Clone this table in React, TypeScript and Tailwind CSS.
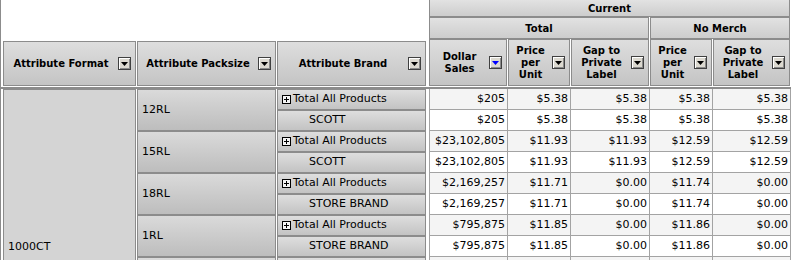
import React from "react";

function DropBtn({ blue }: { blue?: boolean }) {
  return (
    <span className="w-[13px] h-[13px] shrink-0 border border-[#404040] bg-[#dcd9d0] shadow-[inset_1px_1px_0_#ffffff,inset_-1px_-1px_0_#8a8a8a] flex items-center justify-center">
      <svg width="7" height="4" viewBox="0 0 7 4">
        <path d="M0 0H7L3.5 4Z" fill={blue ? "#0000ff" : "#000000"} />
      </svg>
    </span>
  );
}

function PlusBox() {
  return (
    <svg width="9" height="9" viewBox="0 0 9 9" className="shrink-0">
      <rect x="0.5" y="0.5" width="8" height="8" fill="#f4f4f4" stroke="#000" />
      <path d="M2 4.5H7M4.5 2V7" stroke="#000" />
    </svg>
  );
}

const hdr =
  "border border-[#8c8c8c] bg-linear-to-b from-[#dedede] to-[#c4c4c4] flex items-center";

function LeftHeader({ label }: { label: string }) {
  return (
    <div className={hdr + " pr-[4px]"}>
      <span className="flex-1 text-center text-[10px] font-bold leading-[12px]">{label}</span>
      <DropBtn />
    </div>
  );
}

function LeafHeader({ lines, blue }: { lines: string[]; blue?: boolean }) {
  return (
    <div className={hdr + " pr-[4px]"}>
      <span className="flex-1 flex flex-col items-center text-[10px] font-bold leading-[12px]">
        {lines.map((l) => (
          <span key={l}>{l}</span>
        ))}
      </span>
      <DropBtn blue={blue} />
    </div>
  );
}

const packs = ["12RL", "15RL", "18RL", "1RL", ""];
const brands: [string, string][] = [
  ["Total All Products", "SCOTT"],
  ["Total All Products", "SCOTT"],
  ["Total All Products", "STORE BRAND"],
  ["Total All Products", "STORE BRAND"],
  ["", ""],
];

const rows: string[][] = [
  ["$205", "$5.38", "$5.38", "$5.38", "$5.38"],
  ["$205", "$5.38", "$5.38", "$5.38", "$5.38"],
  ["$23,102,805", "$11.93", "$11.93", "$12.59", "$12.59"],
  ["$23,102,805", "$11.93", "$11.93", "$12.59", "$12.59"],
  ["$2,169,257", "$11.71", "$0.00", "$11.74", "$0.00"],
  ["$2,169,257", "$11.71", "$0.00", "$11.74", "$0.00"],
  ["$795,875", "$11.85", "$0.00", "$11.86", "$0.00"],
  ["$795,875", "$11.85", "$0.00", "$11.86", "$0.00"],
  ["", "", "", "", ""],
  ["", "", "", "", ""],
];

export default function App() {
  return (
    <div className="w-[791px] h-[260px] overflow-hidden bg-white flex text-black font-['DejaVu_Sans',Verdana,sans-serif]">
      {/* Left pane */}
      <div className="w-[428px] shrink-0 border-l border-[#8c8c8c] pl-[2px] flex flex-col">
        <div className="h-[41px] shrink-0" />
        <div className="grid grid-cols-[133px_139px_149px] h-[45px] gap-x-px shrink-0">
          <LeftHeader label="Attribute Format" />
          <LeftHeader label="Attribute Packsize" />
          <LeftHeader label="Attribute Brand" />
        </div>
        <div className="h-[3px] shrink-0 border-b-2 border-[#8c8c8c] -ml-[2px]" />
        <div className="grid grid-cols-[133px_139px_149px] grid-rows-[repeat(10,21px)] gap-x-px">
          <div className="row-span-10 border border-[#8c8c8c] bg-[#d4d4d4] pl-[4px] pt-[150px] text-[11px] leading-[13px]">
            1000CT
          </div>
          {packs.map((p, i) => (
            <React.Fragment key={i}>
              <div
                className="row-span-2 col-start-2 border border-[#8c8c8c] bg-linear-to-b from-[#dadada] to-[#bdbdbd] flex items-center pl-[4px] text-[11px]"
                style={{ gridRowStart: i * 2 + 1 }}
              >
                {p}
              </div>
              <div
                className="col-start-3 border border-[#8c8c8c] bg-linear-to-b from-[#dedede] to-[#c3c3c3] flex items-center pl-[4px] text-[11px] whitespace-nowrap"
                style={{ gridRowStart: i * 2 + 1 }}
              >
                {brands[i][0] && (
                  <>
                    <PlusBox />
                    <span className="ml-[2px]">{brands[i][0]}</span>
                  </>
                )}
              </div>
              <div
                className="col-start-3 border border-[#8c8c8c] bg-linear-to-b from-[#dedede] to-[#c3c3c3] flex items-center pl-[31px] text-[11px] whitespace-nowrap"
                style={{ gridRowStart: i * 2 + 2 }}
              >
                {brands[i][1]}
              </div>
            </React.Fragment>
          ))}
        </div>
      </div>

      {/* Right pane */}
      <div className="flex-1 pl-px flex flex-col">
        <div className="grid grid-cols-[78px_62px_78px_62px_77px] grid-rows-[17px_22px_47px] gap-x-px shrink-0">
          <div className="col-span-5 border-x border-b border-[#8c8c8c] bg-linear-to-b from-[#e2e2e2] to-[#cdcdcd] flex items-center justify-center text-[10px] font-bold">
            Current
          </div>
          <div className="col-span-3 border border-[#8c8c8c] bg-linear-to-b from-[#e2e2e2] to-[#cdcdcd] flex items-center justify-center text-[10px] font-bold">
            Total
          </div>
          <div className="col-span-2 border border-[#8c8c8c] bg-linear-to-b from-[#e2e2e2] to-[#cdcdcd] flex items-center justify-center text-[10px] font-bold">
            No Merch
          </div>
          <LeafHeader lines={["Dollar", "Sales"]} blue />
          <LeafHeader lines={["Price", "per", "Unit"]} />
          <LeafHeader lines={["Gap to", "Private", "Label"]} />
          <LeafHeader lines={["Price", "per", "Unit"]} />
          <LeafHeader lines={["Gap to", "Private", "Label"]} />
        </div>
        <div className="h-[3px] shrink-0 border-b-2 border-[#8c8c8c] -ml-px" />
        <div className="grid grid-cols-[77px_62px_78px_62px_77px] auto-rows-[20px] gap-px bg-[#a3a3a3] border-l border-[#a3a3a3] w-[362px]">
          {rows.map((r, i) =>
            r.map((v, j) => (
              <div
                key={i + "-" + j}
                className={
                  (i % 2 === 0 ? "bg-[#f4f4f4]" : "bg-white") +
                  " text-right pr-[2px] text-[11px] leading-[20px] whitespace-nowrap"
                }
              >
                {v}
              </div>
            ))
          )}
        </div>
      </div>
    </div>
  );
}
